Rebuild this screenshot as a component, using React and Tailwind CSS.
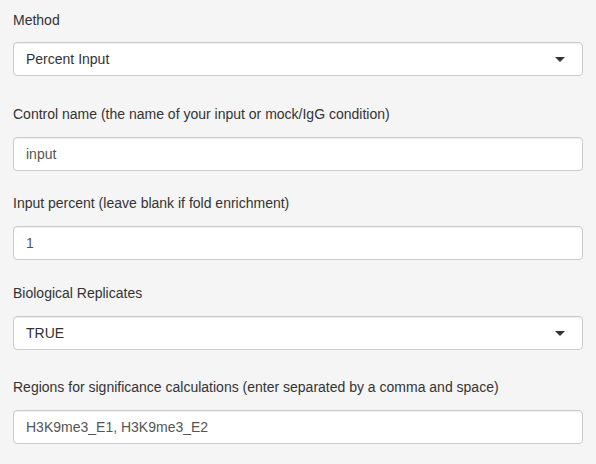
const Caret = () => (
  <span className="absolute right-[17px] top-[14px] w-0 h-0 border-l-[5px] border-r-[5px] border-t-[5px] border-l-transparent border-r-transparent border-t-[#333]" />
);

const Select = ({ value }) => (
  <div className="relative h-[34px] w-full bg-white border border-[#cccccc] rounded-[4px] shadow-[inset_0_1px_1px_rgba(0,0,0,0.075)] pl-3 flex items-center text-[14px] text-[#333333]">
    {value}
    <Caret />
  </div>
);

const TextInput = ({ value }) => (
  <div className="h-[34px] w-full bg-white border border-[#cccccc] rounded-[4px] shadow-[inset_0_1px_1px_rgba(0,0,0,0.075)] pl-3 flex items-center text-[14px] text-[#555555]">
    {value}
  </div>
);

const Label = ({ children, className }) => (
  <label className={`block text-[14px] leading-5 text-[#333333] ${className}`}>
    {children}
  </label>
);

export default function App() {
  return (
    <div
      className="w-[596px] h-[464px] bg-[#f5f5f5] px-[13px] pt-[10px] overflow-hidden"
      style={{ fontFamily: '"Liberation Sans", Arial, sans-serif' }}
    >
      <Label className="mb-[12px]">Method</Label>
      <Select value="Percent Input" />

      <Label className="mt-[28px] mb-[13px]">
        Control name (the name of your input or mock/IgG condition)
      </Label>
      <TextInput value="input" />

      <Label className="mt-[22px] mb-[13px]">
        Input percent (leave blank if fold enrichment)
      </Label>
      <TextInput value="1" />

      <Label className="mt-[23px] mb-[13px]">Biological Replicates</Label>
      <Select value="TRUE" />

      <Label className="mt-[27px] mb-[13px]">
        Regions for significance calculations (enter separated by a comma and
        space)
      </Label>
      <TextInput value="H3K9me3_E1, H3K9me3_E2" />
    </div>
  );
}
